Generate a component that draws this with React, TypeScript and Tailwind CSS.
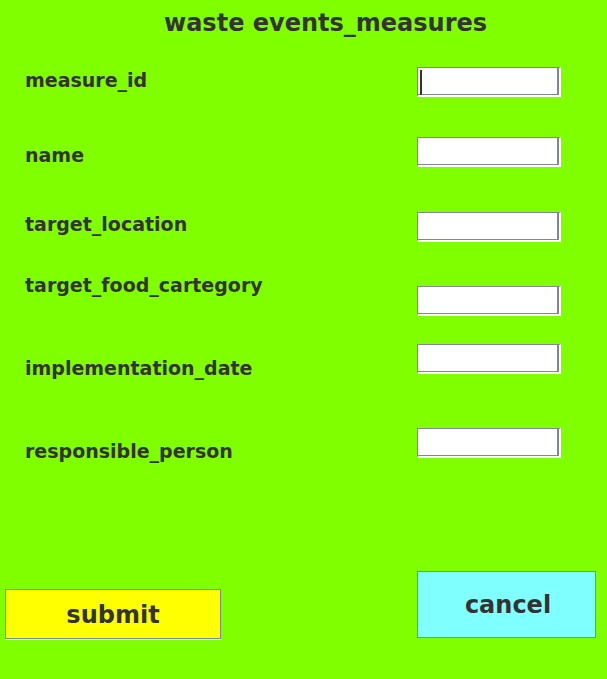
const labels = [
    { text: "measure_id", mt: "mt-[30px]" },
    { text: "name", mt: "mt-[52px]" },
    { text: "target_location", mt: "mt-[46px]" },
    { text: "target_food_cartegory", mt: "mt-[38px]" },
    { text: "implementation_date", mt: "mt-[60px]" },
    { text: "responsible_person", mt: "mt-[60px]" },
]

const inputs = ["mt-[28px]", "mt-[40px]", "mt-[45px]", "mt-[44px]", "mt-[28px]", "mt-[54px]"]

function SunkenBox({ className, caret }: { className: string; caret?: boolean }) {
    return (
        <div className={`${className} w-[144px] h-[30px] bg-white border-t border-l border-[#7f8893] border-r-2 border-b-2 border-r-white border-b-white`}>
            <div className="relative h-full border-r-2 border-b border-[#7f8893]">
                {caret && <div className="absolute left-[2px] top-[2px] w-[2px] h-[25px] bg-[#333333]" />}
            </div>
        </div>
    )
}

export default function App() {
    return (
        <div className="w-[607px] h-[679px] bg-[#80ff00] text-[#333333] font-['DejaVu_Sans',sans-serif] font-bold overflow-hidden">
            <div className="pt-[8px] h-[39px] pl-[164px] text-[24px] leading-[30px]">waste events_measures</div>
            <div className="flex h-[532px]">
                <div className="w-[417px] pl-[25px] flex flex-col items-start text-[19px] leading-[23px]">
                    {labels.map((l) => (
                        <div key={l.text} className={l.mt}>{l.text}</div>
                    ))}
                </div>
                <div className="flex flex-col">
                    {inputs.map((mt, i) => (
                        <SunkenBox key={i} className={mt} caret={i === 0} />
                    ))}
                </div>
            </div>
            <div className="flex items-start">
                <button className="ml-[5px] mt-[18px] w-[216px] h-[50px] bg-[#ffff00] border border-[#7f8aa0] shadow-[0_1px_0_#ffff00] text-[24px] leading-[30px] font-bold pt-[2px]">
                    submit
                </button>
                <button className="ml-[196px] w-[179px] h-[67px] bg-[#80ffff] border border-[#7f8aa0] text-[24px] leading-[30px] font-bold pl-[3px]">
                    cancel
                </button>
            </div>
        </div>
    )
}
